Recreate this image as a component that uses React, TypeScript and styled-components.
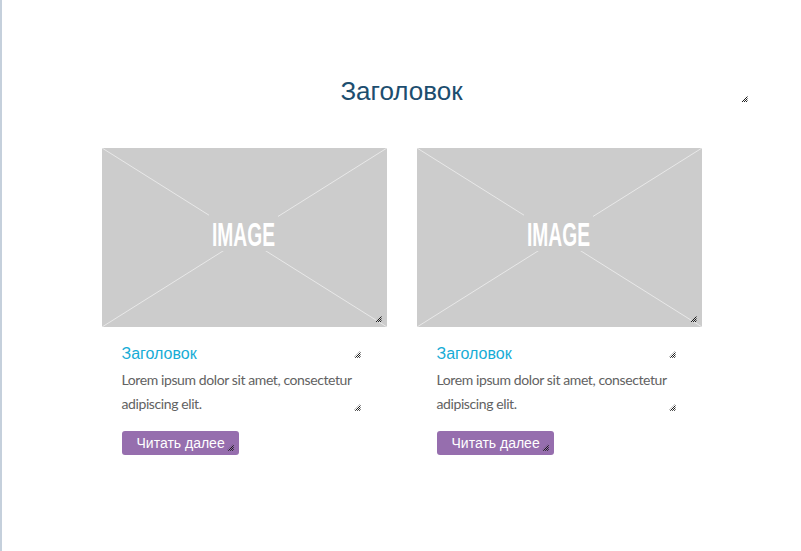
import React from "react";
import styled, { createGlobalStyle, css } from "styled-components";

const GlobalStyle = createGlobalStyle`
  html, body {
    margin: 0;
    padding: 0;
    background: #ffffff;
  }
  body {
    font-family: "Liberation Sans", Arial, sans-serif;
  }
`;

/* small dotted resize grip drawn in the bottom-right corner of editable blocks */
const grip = (right = 5, bottom = 5) => css`
  position: relative;
  &::after {
    content: "";
    position: absolute;
    right: ${right}px;
    bottom: ${bottom}px;
    width: 7px;
    height: 7px;
    background: repeating-conic-gradient(#1e1e1e 0 25%, transparent 0 50%) 0 0 / 2px 2px;
    clip-path: polygon(100% 0, 100% 100%, 0 100%);
    pointer-events: none;
  }
`;

const Page = styled.div`
  min-height: 551px;
  box-sizing: border-box;
  border-left: 2px solid #c5d0dc;
  padding-top: 76px;
`;

const Container = styled.div`
  width: 700px;
  margin: 0 auto;
`;

const Heading = styled.h1`
  margin: 0;
  font: 400 26px/1.2 "Liberation Sans", Arial, sans-serif;
  color: #1d4e6f;
  text-align: center;
  ${grip(4, 5)}
`;

const Cards = styled.div`
  display: grid;
  grid-template-columns: 285px 285px;
  gap: 30px;
  justify-content: center;
  margin-top: 41px;
`;

const Card = styled.div`
  display: flex;
  flex-direction: column;
`;

const ImageBox = styled.div`
  width: 285px;
  height: 179px;
  background: #cccccc;
  ${grip(5, 5)}
  svg {
    display: block;
  }
`;

const CardBody = styled.div`
  padding: 18px 20px 0 20px;
`;

const CardTitle = styled.h3`
  margin: 0;
  font: 400 16px/1.1 "Liberation Sans", Arial, sans-serif;
  color: #17acd6;
  ${grip(6, 5)}
`;

const CardText = styled.p`
  margin: 5px 0 0;
  font: 400 14px/24px Lato, "Noto Sans", sans-serif;
  letter-spacing: -0.4px;
  color: #626262;
  ${grip(6, 5)}
`;

const ReadMore = styled.a`
  display: inline-block;
  margin-top: 15px;
  height: 24px;
  padding: 0 14px 0 15px;
  background: #966eae;
  color: #ffffff;
  border-radius: 3px;
  font: 400 14px/24px "Liberation Sans", Arial, sans-serif;
  text-decoration: none;
  ${grip(5, 4)}
`;

const Placeholder: React.FC = () => (
  <svg width="285" height="179" viewBox="0 0 285 179">
    <line x1="0" y1="0" x2="285" y2="179" stroke="#e8e8e8" strokeWidth="1" />
    <line x1="0" y1="179" x2="285" y2="0" stroke="#e8e8e8" strokeWidth="1" />
    <rect x="107" y="67" width="69" height="36" fill="#cccccc" />
    <text
      x="141.5"
      y="98"
      textAnchor="middle"
      fill="#ffffff"
      fontFamily="Liberation Sans, Arial, sans-serif"
      fontWeight="700"
      fontSize="33.5"
      textLength="63"
      lengthAdjust="spacingAndGlyphs"
    >
      IMAGE
    </text>
  </svg>
);

const items = [1, 2];

export default function App() {
  return (
    <>
      <GlobalStyle />
      <Page>
        <Container>
          <Heading>Заголовок</Heading>
          <Cards>
            {items.map((i) => (
              <Card key={i}>
                <ImageBox>
                  <Placeholder />
                </ImageBox>
                <CardBody>
                  <CardTitle>Заголовок</CardTitle>
                  <CardText>Lorem ipsum dolor sit amet, consectetur adipiscing elit.</CardText>
                  <ReadMore href="#">Читать далее</ReadMore>
                </CardBody>
              </Card>
            ))}
          </Cards>
        </Container>
      </Page>
    </>
  );
}
